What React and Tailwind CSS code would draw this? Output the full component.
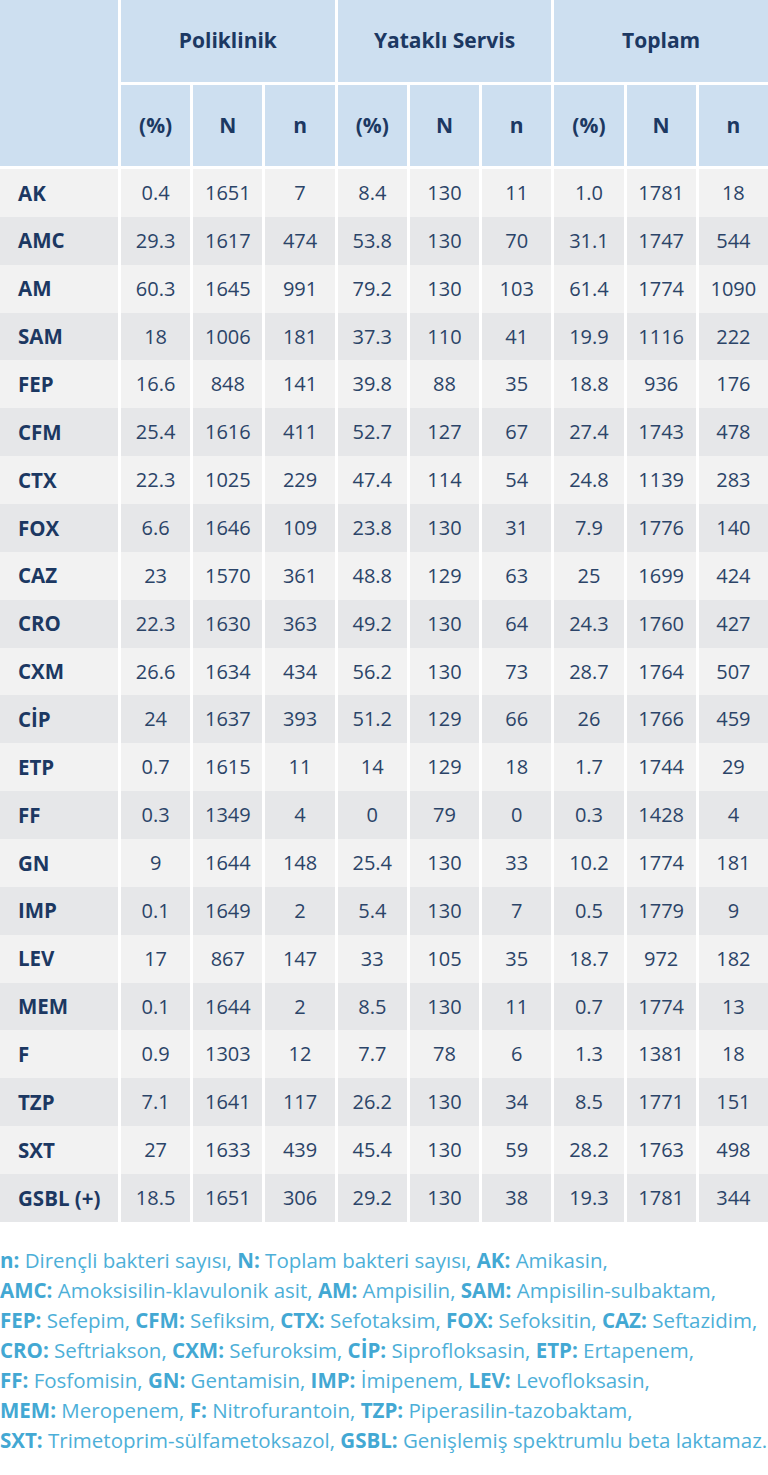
const groups = ['Poliklinik', 'Yataklı Servis', 'Toplam'];
const subs = ['(%)', 'N', 'n'];

// [label, pol %, pol N, pol n, yat %, yat N, yat n, top %, top N, top n]
const rows = [
  ['AK', '0.4', '1651', '7', '8.4', '130', '11', '1.0', '1781', '18'],
  ['AMC', '29.3', '1617', '474', '53.8', '130', '70', '31.1', '1747', '544'],
  ['AM', '60.3', '1645', '991', '79.2', '130', '103', '61.4', '1774', '1090'],
  ['SAM', '18', '1006', '181', '37.3', '110', '41', '19.9', '1116', '222'],
  ['FEP', '16.6', '848', '141', '39.8', '88', '35', '18.8', '936', '176'],
  ['CFM', '25.4', '1616', '411', '52.7', '127', '67', '27.4', '1743', '478'],
  ['CTX', '22.3', '1025', '229', '47.4', '114', '54', '24.8', '1139', '283'],
  ['FOX', '6.6', '1646', '109', '23.8', '130', '31', '7.9', '1776', '140'],
  ['CAZ', '23', '1570', '361', '48.8', '129', '63', '25', '1699', '424'],
  ['CRO', '22.3', '1630', '363', '49.2', '130', '64', '24.3', '1760', '427'],
  ['CXM', '26.6', '1634', '434', '56.2', '130', '73', '28.7', '1764', '507'],
  ['CİP', '24', '1637', '393', '51.2', '129', '66', '26', '1766', '459'],
  ['ETP', '0.7', '1615', '11', '14', '129', '18', '1.7', '1744', '29'],
  ['FF', '0.3', '1349', '4', '0', '79', '0', '0.3', '1428', '4'],
  ['GN', '9', '1644', '148', '25.4', '130', '33', '10.2', '1774', '181'],
  ['IMP', '0.1', '1649', '2', '5.4', '130', '7', '0.5', '1779', '9'],
  ['LEV', '17', '867', '147', '33', '105', '35', '18.7', '972', '182'],
  ['MEM', '0.1', '1644', '2', '8.5', '130', '11', '0.7', '1774', '13'],
  ['F', '0.9', '1303', '12', '7.7', '78', '6', '1.3', '1381', '18'],
  ['TZP', '7.1', '1641', '117', '26.2', '130', '34', '8.5', '1771', '151'],
  ['SXT', '27', '1633', '439', '45.4', '130', '59', '28.2', '1763', '498'],
  ['GSBL (+)', '18.5', '1651', '306', '29.2', '130', '38', '19.3', '1781', '344'],
];

// legend, one array per printed line: [bold key, description]
const legend = [
  [['n:', 'Dirençli bakteri sayısı,'], ['N:', 'Toplam bakteri sayısı,'], ['AK:', 'Amikasin,']],
  [['AMC:', 'Amoksisilin-klavulonik asit,'], ['AM:', 'Ampisilin,'], ['SAM:', 'Ampisilin-sulbaktam,']],
  [['FEP:', 'Sefepim,'], ['CFM:', 'Sefiksim,'], ['CTX:', 'Sefotaksim,'], ['FOX:', 'Sefoksitin,'], ['CAZ:', 'Seftazidim,']],
  [['CRO:', 'Seftriakson,'], ['CXM:', 'Sefuroksim,'], ['CİP:', 'Siprofloksasin,'], ['ETP:', 'Ertapenem,']],
  [['FF:', 'Fosfomisin,'], ['GN:', 'Gentamisin,'], ['IMP:', 'İmipenem,'], ['LEV:', 'Levofloksasin,']],
  [['MEM:', 'Meropenem,'], ['F:', 'Nitrofurantoin,'], ['TZP:', 'Piperasilin-tazobaktam,']],
  [['SXT:', 'Trimetoprim-sülfametoksazol,'], ['GSBL:', 'Genişlemiş spektrumlu beta laktamaz.']],
];

export default function App() {
  return (
    <div className="w-[768px] min-h-[1475px] bg-white font-['Open_Sans',sans-serif]">
      {/* Header: group row + sub row */}
      <div className="grid grid-cols-[118px_repeat(9,minmax(0,1fr))] grid-rows-[82px_81px] gap-[3px]">
        <div className="row-span-2 bg-[#cddff0]" />
        {groups.map((g) => (
          <div
            key={g}
            className="col-span-3 flex items-center justify-center bg-[#cddff0] text-[21px] font-bold text-[#1c3862]"
          >
            {g}
          </div>
        ))}
        {groups.map((g) =>
          subs.map((s) => (
            <div
              key={g + s}
              className="flex items-center justify-center bg-[#cddff0] text-[21px] font-bold text-[#1c3862]"
            >
              {s}
            </div>
          ))
        )}
      </div>

      {/* Data rows */}
      <div className="mt-[3px] grid grid-cols-[118px_repeat(9,minmax(0,1fr))] gap-x-[3px]">
        {rows.map((r, i) => {
          const bg = i % 2 === 0 ? 'bg-[#f2f2f2]' : 'bg-[#e6e7e9]';
          return r.map((v, j) =>
            j === 0 ? (
              <div
                key={i + '-' + j}
                className={`flex h-[47.86px] items-center pl-[18px] text-[20.5px] font-bold text-[#1c3862] ${bg}`}
              >
                {v}
              </div>
            ) : (
              <div
                key={i + '-' + j}
                className={`flex h-[47.86px] items-center justify-center text-[20px] text-[#2b4468] ${bg}`}
              >
                {v}
              </div>
            )
          );
        })}
      </div>

      {/* Legend */}
      <div className="mt-[23px] text-[20.5px] leading-[30px] text-[#4dafd8]">
        {legend.map((line, i) => (
          <div key={i} className="whitespace-nowrap">
            {line.map(([k, d], j) => (
              <span key={j}>
                {j > 0 && ' '}
                <b className="font-bold text-[#43a8d3]">{k}</b> {d}
              </span>
            ))}
          </div>
        ))}
      </div>
    </div>
  );
}
